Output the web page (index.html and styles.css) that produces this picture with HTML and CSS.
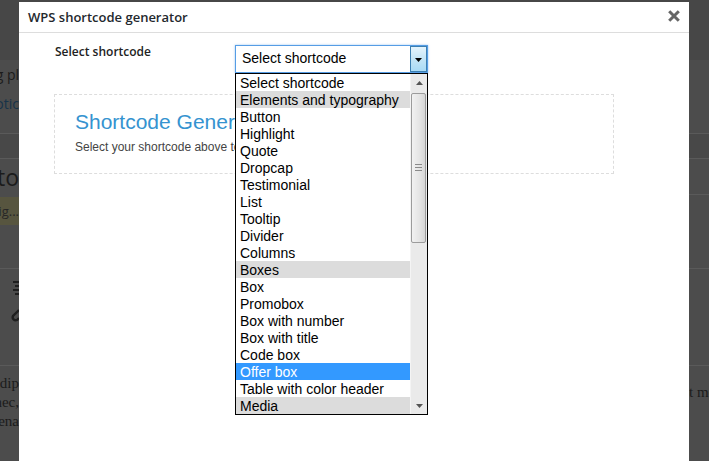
FILE: index.html
```html
<!DOCTYPE html>
<html lang="en">
<head>
<meta charset="utf-8">
<title>WPS shortcode generator</title>
<link rel="stylesheet" href="styles.css">
</head>
<body>
<div class="wp">
  <div class="wp-row r1 plain"><div class="edge-l"></div><div class="mid"></div><div class="edge-r"></div></div>
  <div class="wp-row r2 plain"><div class="edge-l"><span class="wp-text">Activate missing pl</span></div><div class="mid"></div><div class="edge-r"></div></div>
  <div class="wp-row r3 plain"><div class="edge-l"><span class="wp-link">Dismiss this notic</span></div><div class="mid"></div><div class="edge-r"></div></div>
  <div class="wp-row r4 plain"><div class="edge-l"></div><div class="mid"></div><div class="edge-r"></div></div>
  <div class="wp-row r5"><div class="edge-l"></div><div class="mid"></div><div class="edge-r"></div></div>
  <div class="wp-row r6"><div class="edge-l"><span class="wp-title">Photo</span></div><div class="mid"></div><div class="edge-r"></div></div>
  <div class="wp-row r7 plain"><div class="edge-l top"><span class="wp-badge">Config...</span></div><div class="mid"></div><div class="edge-r lined"></div></div>
  <div class="wp-row r8"><div class="edge-l top">
      <svg class="wp-icons" width="19" height="60" viewBox="0 0 19 60">
        <g fill="#1f1f1f">
          <rect x="13" y="12" width="6" height="2"/>
          <rect x="15" y="16" width="4" height="2"/>
          <rect x="13" y="20" width="6" height="2"/>
          <rect x="15" y="24" width="4" height="2"/>
        </g>
        <path d="M19 41 L13 47 a3 3 0 0 0 4 4 L19 49" fill="none" stroke="#1f1f1f" stroke-width="2.4"/>
      </svg>
    </div><div class="mid"></div><div class="edge-r"></div></div>
  <div class="wp-row r9"><div class="edge-l col">
      <span class="wp-serif">consectetur adip</span>
      <span class="wp-serif">Etiam ut nec,</span>
      <span class="wp-serif">Maecenas ena</span>
    </div><div class="mid"></div><div class="edge-r col">
      <span class="wp-serif">t mollis</span>
      <span class="wp-serif">,putate</span>
    </div></div>
</div>

<div class="modal">
  <div class="modal-header">
    <h1 class="modal-title">WPS shortcode generator</h1>
    <button class="modal-close" type="button" aria-label="Close">
      <svg width="12" height="12" viewBox="0 0 12 12"><path d="M1.2 1.2 L10.8 10.8 M10.8 1.2 L1.2 10.8" stroke="#666" stroke-width="3" fill="none"/></svg>
    </button>
  </div>
  <div class="modal-body">
    <div class="field-row">
      <label class="field-label">Select shortcode</label>
      <div class="select-wrap">
        <div class="select">
          <span class="select-value">Select shortcode</span>
          <span class="select-arrow"><svg width="7" height="4" viewBox="0 0 7 4"><polygon points="0,0 7,0 3.5,4" fill="#000"/></svg></span>
        </div>
        <div class="listbox">
          <ul class="options">
            <li>Select shortcode</li>
            <li class="group">Elements and typography</li>
            <li>Button</li>
            <li>Highlight</li>
            <li>Quote</li>
            <li>Dropcap</li>
            <li>Testimonial</li>
            <li>List</li>
            <li>Tooltip</li>
            <li>Divider</li>
            <li>Columns</li>
            <li class="group">Boxes</li>
            <li>Box</li>
            <li>Promobox</li>
            <li>Box with number</li>
            <li>Box with title</li>
            <li>Code box</li>
            <li class="selected">Offer box</li>
            <li>Table with color header</li>
            <li class="group">Media</li>
          </ul>
          <div class="scrollbar">
            <div class="sb-btn"><svg width="7" height="4" viewBox="0 0 7 4"><polygon points="3.5,0 7,4 0,4" fill="#555"/></svg></div>
            <div class="sb-track">
              <div class="sb-thumb"><span class="grip"></span></div>
            </div>
            <div class="sb-btn"><svg width="7" height="4" viewBox="0 0 7 4"><polygon points="0,0 7,0 3.5,4" fill="#555"/></svg></div>
          </div>
        </div>
      </div>
    </div>
    <div class="preview">
      <h2 class="preview-title">Shortcode Generator</h2>
      <p class="preview-text">Select your shortcode above to see the preview here</p>
    </div>
  </div>
</div>
</body>
</html>
```
FILE: styles.css
```css
* { box-sizing: border-box; }
html, body { margin: 0; height: 100%; overflow: hidden; }
body {
  background: #4c4c4c;
  font-family: "Open Sans", "Liberation Sans", sans-serif;
}

/* background admin page (dimmed) */
.wp { display: flex; flex-direction: column; height: 461px; }
.wp-row { display: flex; border-top: 1px solid #5a5a5a; flex: none; }
.wp-row.plain { border-top: 0; }
.r1 { height: 60px; background: #474747; }
.r2 { height: 28px; }
.r3 { height: 30px; }
.r4 { height: 15px; }
.r5 { height: 25px; background: #484848; }
.r6 { height: 36px; }
.r7 { height: 74px; }
.r8 { height: 97px; }
.r9 { flex: 1; }
.edge-l {
  width: 19px; flex: none; overflow: hidden; white-space: nowrap;
  display: flex; justify-content: flex-end; align-items: center;
}
.edge-l.top { align-items: flex-start; }
.edge-l.col, .edge-r.col { flex-direction: column; align-items: flex-end; justify-content: flex-start; }
.mid { flex: 1; }
.edge-r { width: 20px; flex: none; overflow: hidden; white-space: nowrap; }
.edge-r.lined { border-top: 1px solid #5a5a5a; }
.edge-r.col { align-items: flex-start; padding-top: 14px; }
.edge-r.col .wp-serif { line-height: 17px; }
.edge-l.col { padding-top: 8px; }

.wp-text { font-size: 14px; color: #1b1b1b; }
.wp-link { font-size: 14px; color: #173349; }
.wp-title { font-size: 23px; color: #1b1b1b; line-height: 36px; }
.wp-badge {
  margin-top: 3px; height: 28px; line-height: 28px;
  background: #57553f; color: #262626; font-size: 13px; padding-left: 8px;
}
.wp-serif {
  font-family: "Liberation Serif", "DejaVu Serif", serif;
  font-size: 15px; line-height: 19px; color: #1b1b1b;
}

/* modal */
.modal {
  position: fixed; left: 19px; top: 2px; bottom: 0; width: 670px;
  background: #fff;
}
.modal-header {
  height: 31px; border-bottom: 1px solid #dddddd;
  display: flex; align-items: center; justify-content: space-between;
  padding: 0 9px 0 9px;
}
.modal-title {
  margin: 0; font-size: 13px; font-weight: 600; color: #23282d;
  font-family: "Open Sans", "Liberation Sans", sans-serif; line-height: 18px;
}
.modal-close {
  border: 0; background: none; padding: 0; margin: -2px 0 0 0;
  width: 12px; height: 12px; display: block; cursor: pointer;
}
.modal-close svg { display: block; }

.modal-body { padding: 9px 75px 0 35px; }
.field-row { display: grid; grid-template-columns: 181px 193px; }
.field-label {
  padding: 2px 0 0 1px; font-size: 12px; font-weight: 600; color: #222;
  line-height: 16px;
}
.select-wrap { position: relative; margin-top: 3px; }
.select {
  height: 28px; border: 1px solid #569de5;
  box-shadow: 0 0 2px rgba(86, 157, 229, 0.6);
  display: flex; align-items: stretch; background: #fff;
}
.select-value {
  flex: 1; padding-left: 6px; font-family: "Liberation Sans", Arial, sans-serif;
  font-size: 14px; color: #000; line-height: 25px;
}
.select-arrow {
  width: 17px; flex: none; border: 1px solid #3c7fb1;
  background: linear-gradient(#e5f4fc, #c4e5f6 50%, #a9dbf6);
  display: flex; align-items: center; justify-content: center;
}
.select-arrow svg { display: block; margin-top: 1px; }

.listbox {
  position: absolute; left: 0; top: 100%; width: 193px;
  border: 1px solid #000; background: #fff; display: flex;
}
.options {
  list-style: none; margin: 0; padding: 0; flex: 1;
  font-family: "Liberation Sans", Arial, sans-serif; font-size: 14px; color: #000;
}
.options li { height: 17px; line-height: 18px; padding-left: 4px; white-space: nowrap; }
.options li.group { background: #dcdcdc; }
.options li.selected { background: #3399ff; color: #fff; }

.scrollbar {
  width: 17px; flex: none; background: #eaeaea;
  display: flex; flex-direction: column;
  border-left: 1px solid #f4f4f4;
}
.sb-btn { height: 17px; display: flex; align-items: center; justify-content: center; }
.sb-btn svg { display: block; }
.sb-track { flex: 1; padding: 2px 1px 0 0; }
.sb-thumb {
  height: 150px; border: 1px solid #9c9c9c; border-radius: 2px;
  background: linear-gradient(to right, #f2f2f2, #e4e4e4 60%, #d6d6d6);
  display: flex; align-items: center; justify-content: center;
}
.grip {
  width: 7px; height: 7px;
  background: repeating-linear-gradient(#8a8a8a 0 1px, transparent 1px 3px);
  margin-top: -2px;
}

.preview {
  margin-top: 21px; border: 1px dashed #dddddd;
  padding: 15px 20px 19px;
  font-family: "Liberation Sans", Arial, sans-serif;
}
.preview-title {
  margin: 0; font-size: 21px; font-weight: normal; line-height: 24px; color: #3593d0;
}
.preview-text { margin: 6px 0 0; font-size: 12px; line-height: 14px; color: #444; }
```
